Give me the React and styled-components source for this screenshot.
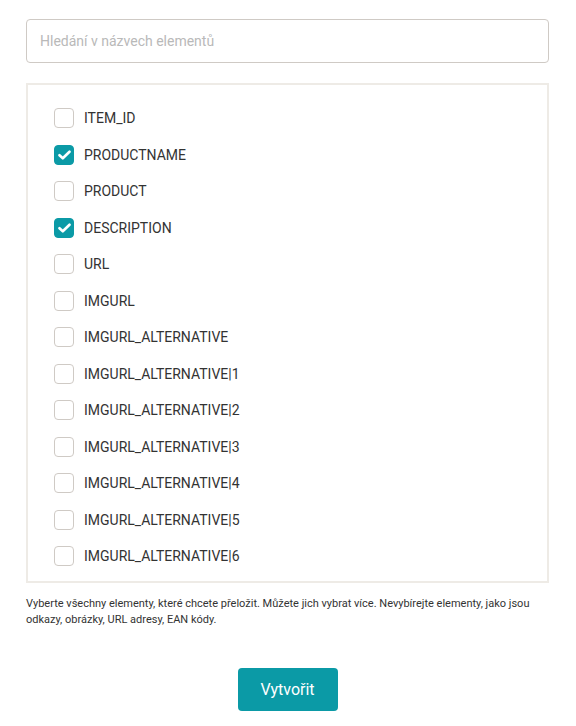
import React, { useState } from "react";
import styled, { createGlobalStyle } from "styled-components";

const Global = createGlobalStyle`
  html, body { margin: 0; padding: 0; background: #fff; }
  body { font-family: Roboto, "Noto Sans", sans-serif; color: #333; }
  * { box-sizing: border-box; }
`;

const Page = styled.div`
  padding: 19px 27px 0 26px;
  display: flex;
  flex-direction: column;
`;

const Search = styled.input`
  width: 100%;
  height: 44px;
  border: 1px solid #cfcac5;
  border-radius: 4px;
  padding: 0 13px;
  font-family: Roboto, sans-serif;
  font-size: 14px;
  color: #333;
  outline: none;
  &::placeholder { color: #b9b9b9; }
`;

const ListBox = styled.div`
  margin-top: 20px;
  border: 2px solid #eeebe6;
  padding: 15px 26px 6px 26px;
  display: flex;
  flex-direction: column;
`;

const Row = styled.label`
  display: flex;
  align-items: center;
  gap: 10px;
  height: 36.5px;
  font-size: 14px;
  color: #333;
  cursor: pointer;
`;

const Box = styled.span`
  width: 20px;
  height: 20px;
  border-radius: 4px;
  border: 1px solid ${p => (p.$checked ? "#0b9aa6" : "#cfcac5")};
  background: ${p => (p.$checked ? "#0b9aa6" : "#fff")};
  display: flex;
  align-items: center;
  justify-content: center;
  flex: none;
`;

const Help = styled.p`
  margin: 13px 0 0 0;
  font-size: 11px;
  line-height: 16px;
  color: #333;
`;

const Actions = styled.div`
  display: flex;
  justify-content: center;
  margin-top: 40px;
`;

const Button = styled.button`
  width: 100px;
  height: 43px;
  border: none;
  border-radius: 4px;
  background: #0b9aa6;
  color: #fff;
  font-family: Roboto, sans-serif;
  font-size: 16px;
  cursor: pointer;
`;

const items = [
  "ITEM_ID",
  "PRODUCTNAME",
  "PRODUCT",
  "DESCRIPTION",
  "URL",
  "IMGURL",
  "IMGURL_ALTERNATIVE",
  "IMGURL_ALTERNATIVE|1",
  "IMGURL_ALTERNATIVE|2",
  "IMGURL_ALTERNATIVE|3",
  "IMGURL_ALTERNATIVE|4",
  "IMGURL_ALTERNATIVE|5",
  "IMGURL_ALTERNATIVE|6",
];

export default function App() {
  const [checked, setChecked] = useState({ PRODUCTNAME: true, DESCRIPTION: true });
  return (
    <Page>
      <Global />
      <Search placeholder="Hledání v názvech elementů" />
      <ListBox>
        {items.map(name => (
          <Row key={name} onClick={() => setChecked(c => ({ ...c, [name]: !c[name] }))}>
            <Box $checked={!!checked[name]}>
              {checked[name] && (
                <svg width="13" height="10" viewBox="0 0 13 10">
                  <path d="M1.5 5.2 L4.8 8.3 L11.5 1.7" fill="none" stroke="#fff" strokeWidth="2.6" strokeLinecap="round" strokeLinejoin="round" />
                </svg>
              )}
            </Box>
            {name}
          </Row>
        ))}
      </ListBox>
      <Help>
        Vyberte všechny elementy, které chcete přeložit. Můžete jich vybrat více. Nevybírejte elementy, jako jsou odkazy, obrázky, URL adresy, EAN kódy.
      </Help>
      <Actions>
        <Button>Vytvořit</Button>
      </Actions>
    </Page>
  );
}
